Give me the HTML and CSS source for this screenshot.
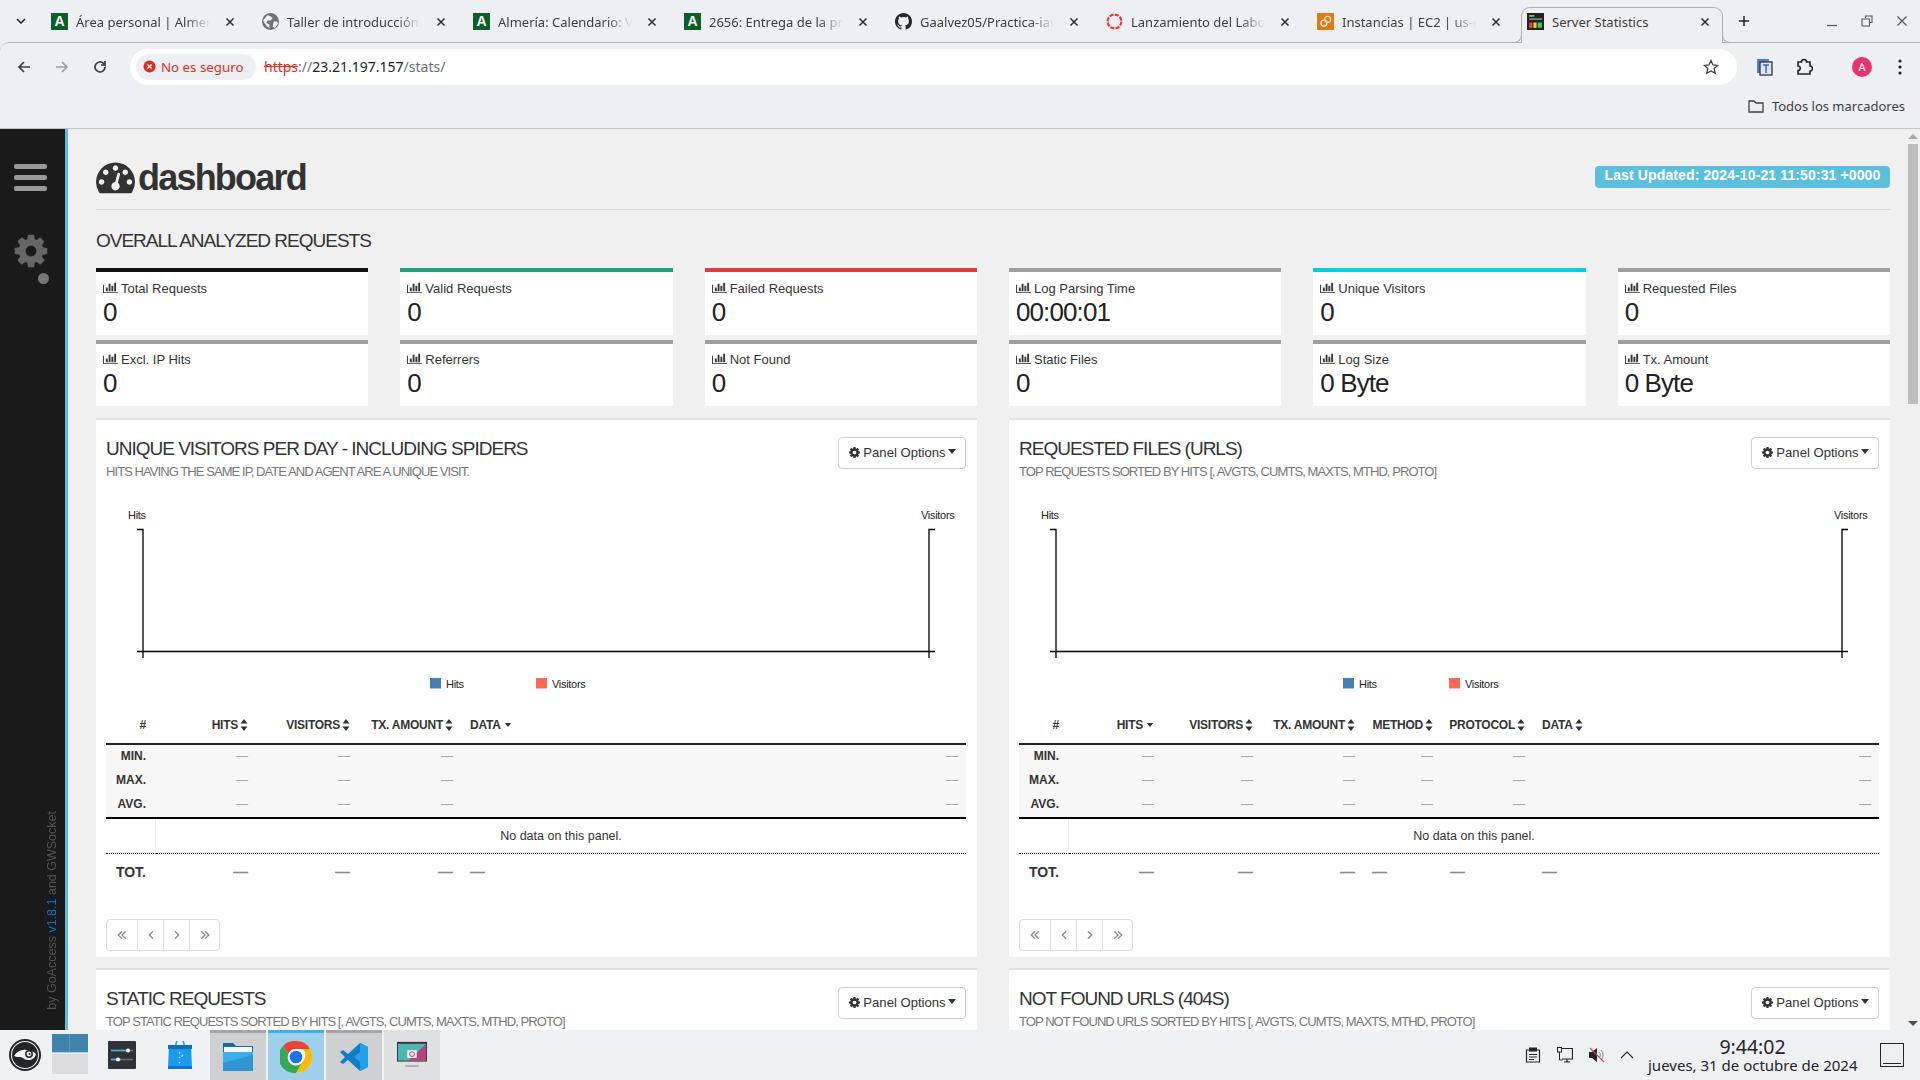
FILE: index.html
```html
<!DOCTYPE html>
<html lang="es">
<head>
<meta charset="utf-8">
<title>Server Statistics</title>
<link rel="stylesheet" href="styles.css">
</head>
<body>
<svg class="defs" aria-hidden="true">
  <symbol id="cog" viewBox="0 0 1792 1792"><path d="M1152 896q0-106-75-181t-181-75-181 75-75 181 75 181 181 75 181-75 75-181zm512-109v222q0 12-8 23t-20 13l-185 28q-19 54-39 91 35 50 107 138 10 12 10 25t-9 23q-27 37-99 108t-94 71q-12 0-26-9l-138-108q-44 23-91 38-16 136-29 186-7 28-36 28h-222q-14 0-24.5-8.5t-11.5-21.5l-28-184q-49-16-90-37l-141 107q-10 9-25 9-14 0-25-11-126-114-165-168-7-10-7-23 0-12 8-23 15-21 51-66.5t54-70.5q-27-50-41-99l-183-27q-13-2-21-12.5t-8-23.5v-222q0-12 8-23t19-13l186-28q14-46 39-92-40-57-107-138-10-12-10-24 0-10 9-23 26-36 98.5-107.5t94.5-71.5q13 0 26 10l138 107q44-23 91-38 16-136 29-186 7-28 36-28h222q14 0 24.5 8.5t11.5 21.5l28 184q49 16 90 37l142-107q9-9 24-9 13 0 25 10 129 119 165 170 7 8 7 22 0 12-8 23-15 21-51 66.5t-54 70.5q26 50 41 98l183 28q13 2 21 12.5t8 23.5z"/></symbol>
  <symbol id="bars" viewBox="0 0 2048 1792"><path d="M640 896v512h-256v-512h256zm384-512v1024h-256v-1024h256zm1024 1152v128h-2048v-1152h128v1024h1920zm-640-896v768h-256v-768h256zm384-384v1152h-256v-1152h256z"/></symbol>
  <symbol id="sort" viewBox="0 0 8 12"><path d="M4 0l3.500 4.600H.5zM4 12L.5 7.400h7z"/></symbol>
  <symbol id="caret" viewBox="0 0 8 5"><path d="M0 0h8L4 5z"/></symbol>
  <symbol id="first" viewBox="0 0 12 12"><path d="M6 1.500L1.500 6 6 10.500M10.500 1.500L6 6l4.500 4.500" fill="none" stroke="currentColor" stroke-width="1.500"/></symbol>
  <symbol id="prev" viewBox="0 0 12 12"><path d="M8.500 1.500L4 6l4.500 4.500" fill="none" stroke="currentColor" stroke-width="1.500"/></symbol>
  <symbol id="next" viewBox="0 0 12 12"><path d="M3.500 1.500L8 6l-4.500 4.500" fill="none" stroke="currentColor" stroke-width="1.500"/></symbol>
  <symbol id="last" viewBox="0 0 12 12"><path d="M1.500 1.500L6 6l-4.500 4.500M6 1.500L10.500 6 6 10.500" fill="none" stroke="currentColor" stroke-width="1.500"/></symbol>
  <symbol id="close" viewBox="0 0 10 10"><path d="M1.500 1.500l7 7M8.500 1.500l-7 7" fill="none" stroke="currentColor" stroke-width="1.500"/></symbol>
  <symbol id="chart" viewBox="0 0 860 195">
    <g fill="none" stroke="#000" stroke-width="1.300">
      <path d="M31 24.500h6V153M823 153V24.500h6M31 146.500h798"/>
    </g>
    <g font-family="Liberation Sans, sans-serif" font-size="11" fill="#222" letter-spacing="-.3">
      <text x="22" y="14">Hits</text>
      <text x="815" y="14">Visitors</text>
      <text x="340" y="183">Hits</text>
      <text x="446" y="183">Visitors</text>
    </g>
    <rect x="324" y="173" width="11" height="10.500" fill="#447fb4"/>
    <rect x="430" y="173" width="11" height="10.500" fill="#ff6854"/>
  </symbol>
</svg>

<div class="tabstrip">
  <svg class="tabs-menu" viewBox="0 0 10 6"><path d="M1 1l4 4 4-4" fill="none" stroke="#202124" stroke-width="1.500"/></svg>
  <div class="tab"><span class="fav fav-a">A</span><span class="tab-title">Área personal | Almería</span><svg class="tab-x"><use href="#close"/></svg></div>
  <div class="tab"><svg class="fav" viewBox="0 0 16 16"><circle cx="8" cy="8" r="8" fill="#6f7276"/><path d="M5 2l3 1 2 2-2 2-3 0-1 2 3 2 0 3-2-1-3-4-1-2zM11 8l3 0 1 2-3 4-2-1z" fill="#eeeff2"/></svg><span class="tab-title">Taller de introducción a</span><svg class="tab-x"><use href="#close"/></svg></div>
  <div class="tab"><span class="fav fav-a">A</span><span class="tab-title">Almería: Calendario: Ver</span><svg class="tab-x"><use href="#close"/></svg></div>
  <div class="tab"><span class="fav fav-a">A</span><span class="tab-title">2656: Entrega de la práctica</span><svg class="tab-x"><use href="#close"/></svg></div>
  <div class="tab"><svg class="fav" viewBox="0 0 16 16"><path fill="#24292f" d="M8 0C3.58 0 0 3.58 0 8c0 3.54 2.29 6.53 5.47 7.59.4.07.55-.17.55-.38 0-.19-.01-.82-.01-1.49-2.01.37-2.53-.49-2.69-.94-.09-.23-.48-.94-.82-1.13-.28-.15-.68-.52-.01-.53.63-.01 1.08.58 1.23.82.72 1.21 1.87.87 2.33.66.07-.52.28-.87.51-1.07-1.78-.2-3.64-.89-3.64-3.95 0-.87.31-1.59.82-2.15-.08-.2-.36-1.02.08-2.12 0 0 .67-.21 2.2.82.64-.18 1.32-.27 2-.27.68 0 1.36.09 2 .27 1.53-1.04 2.2-.82 2.2-.82.44 1.1.16 1.92.08 2.12.51.56.82 1.27.82 2.15 0 3.07-1.87 3.75-3.65 3.95.29.25.54.73.54 1.48 0 1.07-.01 1.93-.01 2.2 0 .21.15.46.55.38A8.013 8.013 0 0016 8c0-4.42-3.58-8-8-8z"/></svg><span class="tab-title">Gaalvez05/Practica-iaw</span><svg class="tab-x"><use href="#close"/></svg></div>
  <div class="tab"><svg class="fav" viewBox="0 0 16 16"><circle cx="8" cy="8" r="6.500" fill="none" stroke="#e53935" stroke-width="2" stroke-dasharray="4 1.100"/></svg><span class="tab-title">Lanzamiento del Laboratorio</span><svg class="tab-x"><use href="#close"/></svg></div>
  <div class="tab"><svg class="fav" viewBox="0 0 16 16"><rect width="16" height="16" fill="#e07a12"/><circle cx="6.500" cy="9.500" r="2.800" fill="none" stroke="#fff" stroke-width="1.200"/><circle cx="10" cy="6" r="2.800" fill="none" stroke="#fbd9a8" stroke-width="1.200"/></svg><span class="tab-title">Instancias | EC2 | us-east</span><svg class="tab-x"><use href="#close"/></svg></div>
  <div class="tab tab-active"><svg class="fav" viewBox="0 0 16 16"><rect width="16" height="16" fill="#222"/><rect x="2" y="2" width="5" height="1.500" fill="#9c6"/><rect x="2" y="5" width="12" height="1.500" fill="#888"/><rect x="2" y="9" width="3" height="5" fill="#e44"/><rect x="6" y="9" width="3" height="5" fill="#fc3"/><rect x="10" y="9" width="4" height="5" fill="#3c6"/></svg><span class="tab-title tab-title-plain">Server Statistics</span><svg class="tab-x"><use href="#close"/></svg></div>
  <svg class="tab-plus" viewBox="0 0 12 12"><path d="M6 1v10M1 6h10" stroke="#202124" stroke-width="1.500"/></svg>
  <div class="winbtns">
    <svg viewBox="0 0 12 12"><path d="M1 10.500h10" stroke="#555" stroke-width="1.200"/></svg>
    <svg viewBox="0 0 12 12"><path d="M4.500 3V1h6.500v6.500H9M1 4h7.500v7H1z" fill="none" stroke="#555" stroke-width="1.100"/></svg>
    <svg viewBox="0 0 12 12"><path d="M1.500 1.500l9 9M10.500 1.500l-9 9" stroke="#555" stroke-width="1.200"/></svg>
  </div>
</div>

<div class="toolbar">
  <svg class="nav" viewBox="0 0 16 16"><path d="M14 8H3M8 3L3 8l5 5" fill="none" stroke="#3c4043" stroke-width="1.700"/></svg>
  <svg class="nav" viewBox="0 0 16 16"><path d="M2 8h11M8 3l5 5-5 5" fill="none" stroke="#9a9da1" stroke-width="1.700"/></svg>
  <svg class="nav" viewBox="0 0 16 16"><path d="M13 8a5 5 0 1 1-1.500-3.600L13 6V2M13 6H9" fill="none" stroke="#3c4043" stroke-width="1.700"/></svg>
  <div class="omnibox">
    <div class="chip">
      <svg class="chip-icon" viewBox="0 0 14 14"><circle cx="7" cy="7" r="6.500" fill="#d93025"/><path d="M4.800 4.800l4.400 4.400M9.200 4.800L4.800 9.200" stroke="#fff" stroke-width="1.400"/></svg>
      <span>No es seguro</span>
    </div>
    <div class="url"><span class="url-scheme">https</span><span class="url-dim">://</span><span class="url-host">23.21.197.157</span><span class="url-dim">/stats/</span></div>
    <svg class="star" viewBox="0 0 16 16"><path d="M8 1.500l2 4.400 4.700.5-3.500 3.200 1 4.700L8 11.900l-4.200 2.400 1-4.700L1.300 6.400 6 5.900z" fill="none" stroke="#3c4043" stroke-width="1.300"/></svg>
  </div>
  <svg class="ext ext-first" viewBox="0 0 18 18"><rect x="1" y="1" width="12" height="14" fill="#4f7fdc"/><rect x="4" y="4" width="12" height="13" fill="#dfe4ee" stroke="#333" stroke-width="1.300"/><path d="M7 7h6M10 7v8" stroke="#3367d6" stroke-width="1.500"/></svg>
  <svg class="ext" viewBox="0 0 18 18"><path d="M3 4h3.500a2.500 2.500 0 0 1 5 0H15v4a2.500 2.500 0 0 1 0 5v3H3v-3.500a2 2 0 0 0 0-4.500z" fill="none" stroke="#202124" stroke-width="1.600"/></svg>
  <span class="avatar">A</span>
  <svg class="dots" viewBox="0 0 4 16"><circle cx="2" cy="2" r="1.600"/><circle cx="2" cy="8" r="1.600"/><circle cx="2" cy="14" r="1.600"/></svg>
</div>

<div class="bookmarks">
  <svg class="bm-folder" viewBox="0 0 16 14"><path d="M1 2h5l2 2h7v9H1z" fill="none" stroke="#3c4043" stroke-width="1.300"/></svg>
  <span>Todos los marcadores</span>
</div>

<div class="page">
  <aside class="sidebar">
    <div class="burger"><i></i><i></i><i></i></div>
    <svg class="side-cog"><use href="#cog"/></svg>
    <span class="side-dot"></span>
    <div class="credit">by GoAccess <span class="credit-ver">v1.8.1</span> and GWSocket</div>
  </aside>

  <main class="main">
    <header class="page-head">
      <h1 class="brand">
        <svg class="brand-icon" viewBox="0 0 1792 1792"><path d="M384 1152q0-53-37.500-90.500t-90.500-37.500-90.500 37.500-37.500 90.500 37.500 90.500 90.500 37.500 90.500-37.500 37.500-90.500zm192-448q0-53-37.500-90.500t-90.500-37.500-90.500 37.500-37.500 90.500 37.500 90.500 90.500 37.500 90.500-37.500 37.500-90.500zm428 481l101-382q6-26-7.500-48.500t-38.500-29.500-48 6.500-30 39.500l-101 382q-60 5-107 43.500t-63 98.500q-20 77 20 146t117 89 146-20 89-117q16-60-6-117t-72-91zm660-33q0-53-37.500-90.500t-90.500-37.500-90.500 37.500-37.500 90.500 37.500 90.500 90.500 37.500 90.500-37.500 37.500-90.500zm-640-640q0-53-37.500-90.500t-90.500-37.500-90.500 37.500-37.500 90.500 37.500 90.500 90.500 37.500 90.500-37.500 37.500-90.500zm448 192q0-53-37.500-90.500t-90.500-37.500-90.500 37.500-37.500 90.500 37.500 90.500 90.500 37.500 90.500-37.500 37.500-90.500zm320 448q0 261-141 483-19 29-54 29h-1402q-35 0-54-29-141-221-141-483 0-182 71-348t191-286 286-191 348-71 348 71 286 191 191 286 71 348z"/></svg>
        <span>dashboard</span>
      </h1>
      <div class="badge">Last Updated: 2024-10-21 11:50:31 +0000</div>
    </header>

    <h2 class="section-title">OVERALL ANALYZED REQUESTS</h2>

    <section class="stats">
      <div class="stat st-black"><div class="stat-label"><svg><use href="#bars"/></svg>Total Requests</div><div class="stat-value">0</div></div>
      <div class="stat st-green"><div class="stat-label"><svg><use href="#bars"/></svg>Valid Requests</div><div class="stat-value">0</div></div>
      <div class="stat st-red"><div class="stat-label"><svg><use href="#bars"/></svg>Failed Requests</div><div class="stat-value">0</div></div>
      <div class="stat"><div class="stat-label"><svg><use href="#bars"/></svg>Log Parsing Time</div><div class="stat-value">00:00:01</div></div>
      <div class="stat st-cyan"><div class="stat-label"><svg><use href="#bars"/></svg>Unique Visitors</div><div class="stat-value">0</div></div>
      <div class="stat"><div class="stat-label"><svg><use href="#bars"/></svg>Requested Files</div><div class="stat-value">0</div></div>
      <div class="stat"><div class="stat-label"><svg><use href="#bars"/></svg>Excl. IP Hits</div><div class="stat-value">0</div></div>
      <div class="stat"><div class="stat-label"><svg><use href="#bars"/></svg>Referrers</div><div class="stat-value">0</div></div>
      <div class="stat"><div class="stat-label"><svg><use href="#bars"/></svg>Not Found</div><div class="stat-value">0</div></div>
      <div class="stat"><div class="stat-label"><svg><use href="#bars"/></svg>Static Files</div><div class="stat-value">0</div></div>
      <div class="stat"><div class="stat-label"><svg><use href="#bars"/></svg>Log Size</div><div class="stat-value">0 Byte</div></div>
      <div class="stat"><div class="stat-label"><svg><use href="#bars"/></svg>Tx. Amount</div><div class="stat-value">0 Byte</div></div>
    </section>

    <section class="panels">
      <article class="panel">
        <div class="panel-head">
          <div class="panel-titles">
            <h3 class="panel-title">UNIQUE VISITORS PER DAY - INCLUDING SPIDERS</h3>
            <p class="panel-sub">HITS HAVING THE SAME IP, DATE AND AGENT ARE A UNIQUE VISIT.</p>
          </div>
          <button class="opts"><svg class="opts-cog"><use href="#cog"/></svg>Panel Options<svg class="opts-caret"><use href="#caret"/></svg></button>
        </div>
        <svg class="chart"><use href="#chart"/></svg>
        <table class="tbl tbl-visitors">
          <colgroup><col class="c-n"><col class="c-1"><col class="c-2"><col class="c-3"><col></colgroup>
          <thead><tr>
            <th>#</th>
            <th>HITS<svg><use href="#sort"/></svg></th>
            <th>VISITORS<svg><use href="#sort"/></svg></th>
            <th>TX. AMOUNT<svg><use href="#sort"/></svg></th>
            <th class="left">DATA<svg class="th-caret"><use href="#caret"/></svg></th>
          </tr></thead>
          <tbody class="summary">
            <tr><th>MIN.</th><td>—</td><td>—</td><td>—</td><td>—</td></tr>
            <tr><th>MAX.</th><td>—</td><td>—</td><td>—</td><td>—</td></tr>
            <tr><th>AVG.</th><td>—</td><td>—</td><td>—</td><td>—</td></tr>
          </tbody>
          <tbody class="nodata"><tr><td></td><td colspan="4">No data on this panel.</td></tr></tbody>
          <tfoot><tr><th>TOT.</th><td>—</td><td>—</td><td>—</td><td class="left">—</td></tr></tfoot>
        </table>
        <nav class="pager-nav">
          <span><svg><use href="#first"/></svg></span><span><svg><use href="#prev"/></svg></span><span><svg><use href="#next"/></svg></span><span><svg><use href="#last"/></svg></span>
        </nav>
      </article>

      <article class="panel">
        <div class="panel-head">
          <div class="panel-titles">
            <h3 class="panel-title">REQUESTED FILES (URLS)</h3>
            <p class="panel-sub">TOP REQUESTS SORTED BY HITS [, AVGTS, CUMTS, MAXTS, MTHD, PROTO]</p>
          </div>
          <button class="opts"><svg class="opts-cog"><use href="#cog"/></svg>Panel Options<svg class="opts-caret"><use href="#caret"/></svg></button>
        </div>
        <svg class="chart"><use href="#chart"/></svg>
        <table class="tbl tbl-requests">
          <colgroup><col class="c-n"><col class="c-1"><col class="c-2"><col class="c-3"><col class="c-4"><col class="c-5"><col></colgroup>
          <thead><tr>
            <th>#</th>
            <th>HITS<svg class="th-caret"><use href="#caret"/></svg></th>
            <th>VISITORS<svg><use href="#sort"/></svg></th>
            <th>TX. AMOUNT<svg><use href="#sort"/></svg></th>
            <th>METHOD<svg><use href="#sort"/></svg></th>
            <th>PROTOCOL<svg><use href="#sort"/></svg></th>
            <th class="left">DATA<svg><use href="#sort"/></svg></th>
          </tr></thead>
          <tbody class="summary">
            <tr><th>MIN.</th><td>—</td><td>—</td><td>—</td><td>—</td><td>—</td><td>—</td></tr>
            <tr><th>MAX.</th><td>—</td><td>—</td><td>—</td><td>—</td><td>—</td><td>—</td></tr>
            <tr><th>AVG.</th><td>—</td><td>—</td><td>—</td><td>—</td><td>—</td><td>—</td></tr>
          </tbody>
          <tbody class="nodata"><tr><td></td><td colspan="6">No data on this panel.</td></tr></tbody>
          <tfoot><tr><th>TOT.</th><td>—</td><td>—</td><td>—</td><td class="left">—</td><td class="left">—</td><td class="left">—</td></tr></tfoot>
        </table>
        <nav class="pager-nav">
          <span><svg><use href="#first"/></svg></span><span><svg><use href="#prev"/></svg></span><span><svg><use href="#next"/></svg></span><span><svg><use href="#last"/></svg></span>
        </nav>
      </article>

      <article class="panel">
        <div class="panel-head">
          <div class="panel-titles">
            <h3 class="panel-title">STATIC REQUESTS</h3>
            <p class="panel-sub">TOP STATIC REQUESTS SORTED BY HITS [, AVGTS, CUMTS, MAXTS, MTHD, PROTO]</p>
          </div>
          <button class="opts"><svg class="opts-cog"><use href="#cog"/></svg>Panel Options<svg class="opts-caret"><use href="#caret"/></svg></button>
        </div>
      </article>

      <article class="panel">
        <div class="panel-head">
          <div class="panel-titles">
            <h3 class="panel-title">NOT FOUND URLS (404S)</h3>
            <p class="panel-sub">TOP NOT FOUND URLS SORTED BY HITS [, AVGTS, CUMTS, MAXTS, MTHD, PROTO]</p>
          </div>
          <button class="opts"><svg class="opts-cog"><use href="#cog"/></svg>Panel Options<svg class="opts-caret"><use href="#caret"/></svg></button>
        </div>
      </article>
    </section>
  </main>

  <div class="scrollbar">
    <i class="arrow-up"></i>
    <div class="thumb"></div>
    <i class="arrow-down"></i>
  </div>
</div>

<footer class="taskbar">
  <div class="tb-start">
    <svg viewBox="0 0 32 32"><circle cx="16" cy="16" r="15" fill="#f4f4f4" stroke="#232629" stroke-width="2"/><circle cx="16" cy="16" r="13" fill="#232629"/><path d="M5 17c3-5 8-7 13-6 4 .5 7 2 9 4-1 4-4 6-8 6-4 0-5-3-8-3-2 0-4 0-6-1z" fill="#f4f4f4"/><circle cx="20" cy="15" r="3.200" fill="none" stroke="#232629" stroke-width="1.500"/><circle cx="20.500" cy="15" r="1" fill="#232629"/></svg>
  </div>
  <div class="tb-vd"><div class="vd-top"><i></i></div><div class="vd-bottom"></div></div>
  <div class="tb-launch tb-launch-first">
    <svg viewBox="0 0 28 28"><rect width="28" height="28" rx="1" fill="#2f3338"/><path d="M3 9.500h22M3 18.500h22" stroke="#6b6f75" stroke-width="1.500"/><path d="M3 9.500h17M3 18.500h10" stroke="#3daee9" stroke-width="1.500"/><circle cx="20" cy="9.500" r="2" fill="#fff"/><circle cx="10" cy="18.500" r="2" fill="#fff"/></svg>
  </div>
  <div class="tb-launch">
    <svg viewBox="0 0 24 28"><path d="M8 6V3a4 4 0 0 1 8 0v3" fill="none" stroke="#3498db" stroke-width="1.500"/><path d="M1 5h22l1 21a2 2 0 0 1-2 2H2a2 2 0 0 1-2-2z" fill="#1a9bf0"/><rect y="4" width="24" height="4" fill="#0e6fb8"/><rect y="25" width="24" height="3" fill="#1272d6"/><path d="M11 11l1 1.500M15 14l-1.500 1.500M11 17l1-1M11 21l1 1" stroke="#cbe8fc" stroke-width="1.500"/></svg>
  </div>
  <div class="task task-open">
    <svg viewBox="0 0 30 28"><path d="M0 0h10l3 3h17v25H0z" fill="#1d6a99"/><rect x="1" y="4" width="28" height="5" fill="#f4f6f7"/><path d="M0 9h30v19H0z" fill="#3daee9"/><path d="M0 20l30-8v16H0z" fill="#2f96d2"/></svg>
  </div>
  <div class="task task-active">
    <svg viewBox="0 0 32 32"><circle class="chrome-ring" cx="16" cy="16" r="16"/><path d="M16 0a16 16 0 0 1 14 8H16a8 8 0 0 0-7.500 5L3 5a16 16 0 0 1 13-5z" fill="#ea4335"/><path d="M30 8a16 16 0 0 1-14 24l7-12a8 8 0 0 0-1-12z" fill="#fbbc05"/><path d="M3 5a16 16 0 0 0 13 27l7-12a8 8 0 0 1-14.500-7z" fill="#34a853"/><circle cx="16" cy="16" r="8" fill="#fff"/><circle cx="16" cy="16" r="6.300" fill="#1a73e8"/></svg>
  </div>
  <div class="task task-open">
    <svg viewBox="0 0 28 28"><path d="M20 0l8 4v20l-8 4L8 17l-5 4-3-2 5-5-5-5 3-2 5 4z" fill="#0f7ec4"/><path d="M20 0l8 4v20l-8 4V19l-6-5 6-5z" fill="#22a0ea"/></svg>
  </div>
  <div class="task task-plain">
    <svg viewBox="0 0 32 28"><rect width="32" height="21" fill="#333"/><rect x="1" y="2" width="30" height="18" fill="#4cb8b0"/><path d="M31 2v18H12z" fill="#b5447e"/><rect x="11" y="9" width="10" height="8" fill="#fff"/><circle cx="16" cy="13" r="2.500" fill="none" stroke="#c6538c" stroke-width="1.200"/><rect x="9" y="25" width="14" height="1.500" fill="#999"/></svg>
  </div>
  <div class="tray">
    <svg viewBox="0 0 16 16"><path d="M1.500 3h13v12h-13z" fill="#eff0f1" stroke="#232629" stroke-width="1.200"/><rect x="4" y="0.500" width="8" height="4" fill="#232629"/><path d="M4 7.500h8M4 10h8M4 12.500h5" stroke="#232629"/></svg>
    <svg viewBox="0 0 16 16"><path d="M5 1.500h10.500V12H5M7 15h6M10 12v3" fill="none" stroke="#232629" stroke-width="1.200"/><rect x="0.500" y="0.500" width="4" height="4.500" fill="none" stroke="#232629"/><path d="M2.500 5v8h3" fill="none" stroke="#232629"/></svg>
    <svg viewBox="0 0 16 16"><path d="M0 5h3l5-4v14l-5-4H0z" fill="#232629"/><path d="M10 5a4 4 0 0 1 0 6M12 3a7 7 0 0 1 0 10" fill="none" stroke="#888"/><path d="M1 1l14 14" stroke="#da4453" stroke-width="1.100"/></svg>
    <svg class="tray-chev" viewBox="0 0 14 8"><path d="M1 7l6-6 6 6" fill="none" stroke="#232629" stroke-width="1.100"/></svg>
    <div class="clock"><div class="clock-time">9:44:02</div><div class="clock-date">jueves, 31 de octubre de 2024</div></div>
    <div class="show-desktop"><i></i></div>
  </div>
</footer>
</body>
</html>
```
FILE: styles.css
```css
* { box-sizing: border-box; }
html, body { margin: 0; height: 1080px; overflow: hidden; }
body {
  display: flex;
  flex-direction: column;
  font-family: "Liberation Sans", Arial, sans-serif;
  color: #333;
  background: #eeeff2;
}
.defs { position: absolute; width: 0; height: 0; }

/* browser chrome */
.tabstrip {
  height: 42px;
  flex: none;
  display: flex;
  align-items: stretch;
  font-family: "Noto Sans", sans-serif;
  font-size: 13px;
  color: #3c4043;
  padding-left: 16px;
  position: relative;
  z-index: 1;
}
.tabs-menu { width: 10px; height: 6px; align-self: center; margin: 0 13px 0 0; flex: none; }
.tab {
  width: 211px;
  flex: none;
  display: flex;
  align-items: center;
  padding-left: 12px;
  padding-top: 1px;
}
.fav { width: 17px; height: 17px; flex: none; margin-right: 8px; }
.fav-a {
  background: #0b5f28;
  color: #fff;
  font: bold 14px/17px "Liberation Sans", sans-serif;
  text-align: center;
}
.tab-title {
  width: 140px;
  flex: none;
  white-space: nowrap;
  overflow: hidden;
  -webkit-mask-image: linear-gradient(90deg, #000 78%, transparent 96%);
  mask-image: linear-gradient(90deg, #000 78%, transparent 96%);
}
.tab-title-plain { -webkit-mask-image: none; mask-image: none; width: 139px; }
.tab-x { width: 10px; height: 10px; margin-left: 9px; color: #2b2d30; flex: none; }
.tab-active {
  width: 202px;
  margin-left: 5px;
  margin-top: 7px;
  margin-bottom: -1px;
  padding: 0 0 8px 5px;
  background: #eeeff2;
  border: 1px solid #aeb0b4;
  border-bottom: 0;
  border-radius: 9px 9px 0 0;
  position: relative;
}
.tab-active::before, .tab-active::after {
  content: "";
  position: absolute;
  bottom: 0;
  width: 8px;
  height: 8px;
  border-bottom: 1px solid #aeb0b4;
}
.tab-active::before { left: -9px; border-right: 1px solid #aeb0b4; border-bottom-right-radius: 8px; }
.tab-active::after { right: -9px; border-left: 1px solid #aeb0b4; border-bottom-left-radius: 8px; }
.tab-plus { width: 12px; height: 12px; align-self: center; margin-left: 15px; flex: none; }
.winbtns { margin-left: auto; display: flex; align-items: center; gap: 23px; padding-right: 12px; }
.winbtns svg { width: 12px; height: 12px; }

.toolbar {
  height: 50px;
  flex: none;
  border-top: 1px solid #aeb0b4;
  border-top-left-radius: 9px;
  display: flex;
  align-items: center;
  padding: 0 0 2px 16px;
  background: #eeeff2;
}
.nav { width: 16px; height: 16px; margin-right: 22px; flex: none; }
.nav:nth-child(3) { margin-right: 22px; }
.omnibox {
  width: 1607px;
  height: 36px;
  flex: none;
  border-radius: 18px;
  background: #fff;
  display: flex;
  align-items: center;
  padding-left: 6px;
  font-family: "Noto Sans", sans-serif;
  font-size: 14px;
}
.chip {
  width: 120px;
  height: 26px;
  border-radius: 13px;
  background: #eeeff2;
  color: #d93025;
  display: flex;
  align-items: center;
  padding-left: 7px;
  gap: 5px;
  flex: none;
  white-space: nowrap;
  font-size: 13.300px;
}
.chip-icon { width: 13px; height: 13px; flex: none; }
.url { margin-left: 8px; white-space: nowrap; }
.url-scheme { color: #d93025; text-decoration: line-through; }
.url-dim { color: #6b6e72; }
.url-host { color: #202124; }
.star { width: 16px; height: 16px; margin-left: auto; margin-right: 18px; flex: none; }
.ext { width: 18px; height: 18px; flex: none; margin-left: 21px; }
.ext-first { margin-left: 19px; }
.avatar {
  width: 20px;
  height: 20px;
  border-radius: 50%;
  background: #e8336e;
  color: #fff;
  font: 11px/20px "Noto Sans", sans-serif;
  text-align: center;
  margin-left: 39px;
  flex: none;
}
.dots { width: 4px; height: 16px; margin-left: 26px; fill: #202124; flex: none; }

.bookmarks {
  height: 37px;
  flex: none;
  display: flex;
  align-items: center;
  justify-content: flex-end;
  gap: 8px;
  padding: 0 15px 8px 0;
  font-family: "Noto Sans", sans-serif;
  font-size: 13px;
  color: #3c4043;
  border-bottom: 1px solid #c2c4c8;
}
.bm-folder { width: 16px; height: 14px; }

/* page */
.page { height: 901px; flex: none; display: flex; background: #f0f0f0; overflow: hidden; }
.sidebar {
  width: 68px;
  flex: none;
  background: #1a1a1a;
  border-right: 3px solid #5bc0de;
  display: flex;
  flex-direction: column;
  align-items: flex-start;
  padding: 35px 0 20px 14px;
}
.burger { display: flex; flex-direction: column; gap: 6px; }
.burger i { width: 33px; height: 5px; border-radius: 2px; background: #999; display: block; }
.side-cog { width: 38px; height: 38px; margin: 41px 0 0 -2.500px; fill: #666; flex: none; }
.side-dot { width: 11px; height: 11px; border-radius: 50%; background: #777; margin: 3px 0 0 24px; flex: none; }
.credit {
  margin-top: auto;
  align-self: flex-end;
  writing-mode: vertical-rl;
  transform: rotate(180deg);
  font-size: 12.500px;
  line-height: 14px;
  color: #555;
  margin-right: 6px;
  white-space: nowrap;
}
.credit-ver { color: #0a78c0; }

.main { flex: 1; min-width: 0; padding: 0 18px 0 28px; overflow: hidden; }
.page-head {
  height: 81px;
  border-bottom: 1px solid #d5d5d5;
  display: flex;
  justify-content: space-between;
  align-items: flex-start;
  padding-top: 29px;
}
.brand {
  margin: 0;
  display: flex;
  align-items: center;
  gap: 3px;
  font-size: 36px;
  line-height: 40px;
  font-weight: bold;
  letter-spacing: -1.800px;
  color: #333;
}
.brand-icon { width: 39px; height: 39px; fill: #333; margin-top: -3px; }
.badge {
  margin-top: 8px;
  height: 22px;
  width: 295px;
  background: #5bc0de;
  color: #fff;
  border-radius: 4px;
  font-size: 14px;
  font-weight: bold;
  letter-spacing: .12px;
  line-height: 18px;
  text-align: center;
  white-space: nowrap;
}
.section-title {
  margin: 19px 0 15px;
  font-size: 19px;
  line-height: 24px;
  font-weight: normal;
  letter-spacing: -1px;
  color: #333;
}
.stats { display: grid; grid-template-columns: repeat(6, 1fr); grid-template-rows: 67px 66px; gap: 5px 32px; }
.stat { background: #fff; border-top: 4px solid #9e9e9e; padding: 8px 7px 0; }
.stat:nth-child(n+7) { padding-top: 7px; }
.st-black { border-top-color: #111; }
.st-green { border-top-color: #26a17c; }
.st-red { border-top-color: #e03c3c; }
.st-cyan { border-top-color: #00d1e0; }
.stat-label { font-size: 13px; line-height: 18px; color: #333; display: flex; align-items: center; white-space: nowrap; }
.stat-label svg { width: 15px; height: 13px; margin-right: 3px; fill: #333; margin-top: -3px; flex: none; }
.stat-value { font-size: 26px; line-height: 29px; color: #222; letter-spacing: -.9px; }

.panels { display: grid; grid-template-columns: 1fr 1fr; gap: 11px 32px; margin-top: 12px; }
.panel { background: #fff; border-top: 2px solid #e2e2e2; padding: 17px 11px 6px 10px; }
.panel-head { display: flex; justify-content: space-between; align-items: flex-start; height: 43px; margin-bottom: 25px; }
.panel-titles { padding-top: 1px; }
.panel-title { margin: 0; font-size: 19px; line-height: 22px; font-weight: normal; letter-spacing: -1px; color: #333; white-space: nowrap; }
.panel-sub { margin: 5px 0 0; font-size: 13px; line-height: 14px; letter-spacing: -.93px; color: #777; white-space: nowrap; }
.opts {
  width: 128px;
  height: 32px;
  border: 1px solid #ccc;
  border-radius: 4px;
  background: #fff;
  color: #333;
  font: 13.100px "Liberation Sans", sans-serif;
  padding: 0 0 2px;
  display: flex;
  align-items: center;
  justify-content: center;
  white-space: nowrap;
  flex: none;
}
.opts-cog { width: 13px; height: 13px; fill: #333; margin-right: 2px; }
.opts-caret { width: 8px; height: 5px; fill: #333; margin: 0 0 2px 2px; }
.chart { display: block; width: 860px; height: 195px; }

.tbl { width: 860px; border-collapse: separate; border-spacing: 0; table-layout: fixed; font-size: 12px; }
.c-n { width: 50px; }
.tbl-visitors .c-1 { width: 100px; }
.tbl-visitors .c-2 { width: 102px; }
.tbl-visitors .c-3 { width: 103px; }
.tbl-requests .c-1 { width: 93px; }
.tbl-requests .c-2 { width: 99px; }
.tbl-requests .c-3 { width: 102px; }
.tbl-requests .c-4 { width: 78px; }
.tbl-requests .c-5 { width: 92px; }
.tbl th, .tbl td { padding: 0 8px; text-align: right; white-space: nowrap; }
.tbl th:first-child { padding-right: 10px; }
.tbl .left { text-align: left; padding-left: 9px; }
.tbl thead th {
  height: 45px;
  border-bottom: 2px solid #222;
  font-size: 12px;
  font-weight: bold;
  letter-spacing: -.25px;
  color: #333;
  padding-top: 6px;
}
.tbl thead svg { width: 8px; height: 12px; margin-left: 2px; fill: #333; vertical-align: -2px; }
.tbl thead .th-caret { height: 4px; vertical-align: 2px; margin-left: 3px; }
.summary tr { height: 24px; }
.summary th, .summary td { background: #f7f7f7; color: #aaa; padding-bottom: 2px; }
.summary th { color: #333; font-size: 12px; }
.summary tr:last-child th, .summary tr:last-child td { border-bottom: 2px solid #000; height: 26px; padding-bottom: 2px; }
.nodata td { height: 35px; text-align: center !important; border-bottom: 1px dotted #000; font-size: 12.500px; color: #333; }
.nodata td:first-child { border-right: 1px solid #eee; }
.tbl tfoot th, .tbl tfoot td { height: 35px; }
.tbl tfoot th { font-size: 14px; color: #333; }
.tbl tfoot td { font-size: 15px; color: #888; font-weight: bold; }

.pager-nav {
  display: inline-flex;
  height: 32px;
  margin-top: 30px;
  border: 1px solid #ddd;
  border-radius: 4px;
  color: #888;
  vertical-align: top;
}
.pager-nav span { width: 26px; display: flex; align-items: center; justify-content: center; border-left: 1px solid #ddd; }
.pager-nav span:first-child { border-left: 0; width: 30px; }
.pager-nav span:last-child { width: 30px; }
.pager-nav svg { width: 10px; height: 10px; }

.scrollbar { width: 12px; flex: none; display: flex; flex-direction: column; align-items: flex-start; padding: 5px 0 4px; }
.arrow-up, .arrow-down { width: 0; height: 0; border-left: 5px solid transparent; border-right: 5px solid transparent; }
.arrow-up { border-bottom: 5px solid #a6a6a6; }
.arrow-down { border-top: 5px solid #505050; margin-top: auto; }
.thumb { width: 10px; height: 260px; margin-top: 5px; background: #bdbdbd; }

/* KDE taskbar */
.taskbar {
  height: 50px;
  flex: none;
  background: #eff0f1;
  display: flex;
  align-items: stretch;
}
.tb-start { width: 50px; display: flex; align-items: center; justify-content: center; flex: none; }
.tb-start svg { width: 32px; height: 32px; }
.tb-vd { width: 36px; margin-left: 2px; padding-top: 4px; display: flex; flex-direction: column; gap: 1px; flex: none; }
.vd-top { height: 19px; background: #3f83ac; border-bottom: 1px solid #9ed0eb; display: flex; }
.vd-top i { width: 18px; border-right: 1px solid #5d97b9; display: block; }
.vd-bottom { height: 20px; background: #dcdcde; }
.tb-launch { width: 58px; flex: none; display: flex; align-items: center; justify-content: center; }
.tb-launch-first { margin-left: 5px; }
.tb-launch svg { width: 28px; height: 28px; }
.task { width: 56px; margin-right: 2px; flex: none; display: flex; align-items: center; justify-content: center; border-top: 3px solid transparent; }
.tb-launch + .task { margin-left: 1px; }
.task svg { width: 30px; height: 28px; }
.task-open { background: #cfd0d2; border-top-color: #a3a4a6; }
.task-active { background: #9ed0eb; border-top-color: #3daee9; }
.task-active svg { width: 32px; height: 32px; }
.task-plain { background: #dfe0e2; border-top: 0; }
.chrome-ring { fill: #fff; }
.tray { margin-left: auto; display: flex; align-items: center; gap: 16px; padding-right: 16px; }
.tray > svg { width: 16px; height: 16px; flex: none; }
.tray .tray-chev { width: 14px; height: 8px; margin-left: -1px; }
.clock { width: 209px; margin: -1px 7px 0 -2px; text-align: center; font-family: "Noto Sans", sans-serif; color: #232629; }
.clock-time { font-size: 19.500px; line-height: 20px; }
.clock-date { font-size: 15px; line-height: 16px; white-space: nowrap; }
.show-desktop { width: 24px; height: 24px; border: 1px solid #232629; display: flex; align-items: flex-end; padding: 0 2px 2px; }
.show-desktop i { display: block; width: 100%; height: 1px; background: #232629; }
```
